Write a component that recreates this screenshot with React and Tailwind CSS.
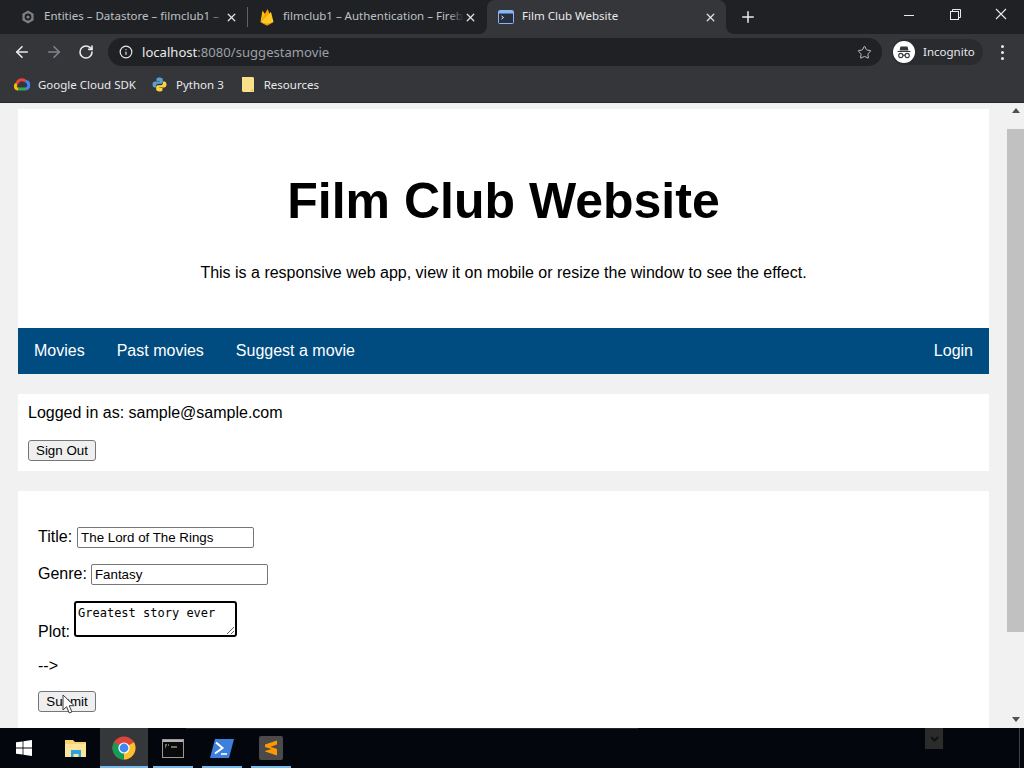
// App.jsx — Film Club "suggest a movie" page inside an incognito Chrome window on Windows.
import { ArrowLeft, ArrowRight, RotateCw, Info, Star, X, Plus } from "lucide-react";

const UI_FONT = "font-['Noto_Sans','Open_Sans',sans-serif]";
const PAGE_FONT = "font-['Liberation_Sans',Arial,sans-serif]";

function DatastoreIcon() {
  return (
    <svg width="16" height="16" viewBox="0 0 16 16" fill="none">
      <path d="M8 1.500 13.600 4.700v6.600L8 14.500 2.400 11.300V4.700z" fill="#7d8084" />
      <circle cx="8" cy="8" r="3.400" fill="#202124" />
      <circle cx="8" cy="8" r="1.600" fill="#7d8084" />
    </svg>
  );
}

function FirebaseIcon() {
  return (
    <svg width="16" height="18" viewBox="0 0 16 18">
      <path d="M1.500 14 3.500 2.500 7 7.500z" fill="#ffc107" />
      <path d="M1.500 14 8.500 1 11 6.500z" fill="#ffa000" />
      <path d="M1.500 14 12 4 14.500 14 8 17.500z" fill="#ffca28" />
      <path d="M1.500 14 8 17.500 14.500 14 8 15.800z" fill="#f59000" />
    </svg>
  );
}

function PageIcon() {
  return (
    <svg width="16" height="14" viewBox="0 0 16 14">
      <rect x="0.500" y="0.500" width="15" height="13" rx="1" fill="#27303c" stroke="#8ab4f8" />
      <rect x="1" y="1" width="14" height="2.500" fill="#8ab4f8" />
      <path d="M3.500 6l2 1.500-2 1.500" fill="none" stroke="#e8eaed" />
    </svg>
  );
}

function Tab({ icon, title, active, className }) {
  return (
    <div className={`flex h-[34px] shrink-0 items-center ${className} ${active ? "text-[#e8eaed]" : "text-[#bdc1c6]"}`}>
      <span className="flex w-[16px] justify-center">{icon}</span>
      <span className="relative ml-[8px] flex-1 whitespace-nowrap pb-[2px] text-[11.5px]">
        {title}
        {!active && (
          <span className="absolute inset-y-0 right-0 w-4 bg-gradient-to-r from-transparent to-[#202124]" />
        )}
      </span>
      <X size={13} strokeWidth={2.400} className="shrink-0 text-[#e0e2e5]" />
    </div>
  );
}

function TabStrip() {
  return (
    <div className="flex h-[34px] items-center bg-[#202124] pl-[20px]">
      <Tab icon={<DatastoreIcon />} title="Entities – Datastore – filmclub1 –" className="w-[218px]" />
      <span className="ml-[9px] h-5 w-px bg-[#5f6368]" />
      <Tab icon={<FirebaseIcon />} title="filmclub1 – Authentication – Fireb" className="ml-[11px] w-[218px]" />
      <div className="relative ml-[10px] w-[239px] shrink-0 rounded-t-lg bg-[#35363a] pl-[11px] pr-[9px]">
        <span className="absolute bottom-0 left-[-8px] h-2 w-2 bg-[#35363a]">
          <span className="block h-2 w-2 rounded-br-lg bg-[#202124]" />
        </span>
        <span className="absolute bottom-0 right-[-8px] h-2 w-2 bg-[#35363a]">
          <span className="block h-2 w-2 rounded-bl-lg bg-[#202124]" />
        </span>
        <Tab icon={<PageIcon />} title="Film Club Website" active />
      </div>
      <Plus size={18} strokeWidth={2} className="ml-[13px] text-[#e8eaed]" />
      <div className="ml-auto flex h-[34px] items-center text-[#e8eaed]">
        <span className="flex w-[46px] justify-center pb-[3px]">
          <span className="h-px w-[10px] bg-[#e8eaed]" />
        </span>
        <span className="flex w-[46px] justify-center pb-[6px]">
          <svg width="11" height="11" viewBox="0 0 11 11" fill="none" stroke="#e8eaed">
            <rect x="0.500" y="2.500" width="8" height="8" fill="#202124" />
            <path d="M2.500 2.500v-2h8v8h-2" />
          </svg>
        </span>
        <span className="flex w-[46px] justify-center pb-[6px]">
          <svg width="12" height="12" viewBox="0 0 12 12" stroke="#e8eaed" strokeWidth="1.100">
            <path d="M1 1l10 10M11 1 1 11" />
          </svg>
        </span>
      </div>
    </div>
  );
}

function IncognitoIcon() {
  return (
    <svg width="22" height="22" viewBox="0 0 22 22">
      <circle cx="11" cy="11" r="11" fill="#fff" />
      <path d="M7.500 5.500h7l1 4h-9zM4.500 10h13v1h-13z" fill="#35363a" />
      <g fill="none" stroke="#35363a" strokeWidth="1.100">
        <circle cx="7.800" cy="14.500" r="2.100" />
        <circle cx="14.200" cy="14.500" r="2.100" />
        <path d="M9.900 14.300h2.200" />
      </g>
    </svg>
  );
}

function Toolbar() {
  return (
    <div className="flex h-[36px] items-center bg-[#35363a] pl-[13px]">
      <ArrowLeft size={18} strokeWidth={2.200} className="text-[#e8eaed]" />
      <ArrowRight size={18} strokeWidth={2.200} className="ml-[14px] text-[#80848a]" />
      <RotateCw size={16} strokeWidth={2.400} className="ml-[15px] text-[#e8eaed]" />
      <div className="ml-[14px] flex h-[28px] w-[774px] items-center rounded-full bg-[#202124] pl-[11px]">
        <Info size={14} strokeWidth={2} className="text-[#e8eaed]" />
        <span className="ml-[9px] pt-[1px] text-[13.1px] leading-none text-[#e8eaed]">
          localhost<span className="text-[#9aa0a6]">:8080/suggestamovie</span>
        </span>
        <Star size={15} strokeWidth={1.600} className="ml-auto mr-[10px] text-[#bdc1c6]" />
      </div>
      <div className="ml-[10px] flex h-[26px] w-[91px] items-center rounded-full bg-[#2a2b2e] pl-[1px]">
        <IncognitoIcon />
        <span className="ml-[8px] text-[11.5px] text-[#e8eaed]">Incognito</span>
      </div>
      <span className="ml-[18px] flex flex-col gap-[3px]">
        <span className="h-[3px] w-[3px] rounded-full bg-[#e8eaed]" />
        <span className="h-[3px] w-[3px] rounded-full bg-[#e8eaed]" />
        <span className="h-[3px] w-[3px] rounded-full bg-[#e8eaed]" />
      </span>
    </div>
  );
}

function CloudIcon() {
  return (
    <svg width="16" height="13" viewBox="0 0 16 13" fill="none" strokeWidth="3">
      <path d="M4.500 11H4a2.700 2.700 0 0 1-1-5.200" stroke="#fbbc05" />
      <path d="M3 5.800A5 5 0 0 1 11.500 3.200" stroke="#ea4335" />
      <path d="M11.500 3.200A4 4 0 0 1 12 11" stroke="#4285f4" />
      <path d="M4 11h8" stroke="#34a853" />
    </svg>
  );
}

function PythonIcon() {
  return (
    <svg width="15" height="15" viewBox="0 0 15 15">
      <path d="M7.500.5c-3 0-3 1.200-3 2.200V4h3.200v.6H2.800C1.400 4.600.5 5.700.5 7.500s.9 3 2.200 3H4V9c0-1.300 1-2.200 2.300-2.200h2.800c1 0 1.700-.8 1.700-1.800V2.700C10.800 1.400 9.700.5 7.500.5z" fill="#5a9fd4" />
      <path d="M7.500 14.500c3 0 3-1.200 3-2.200V11H7.300v-.6h4.900c1.400 0 2.300-1.100 2.300-2.900s-.9-3-2.200-3H11V6c0 1.300-1 2.200-2.300 2.200H5.900c-1 0-1.700.8-1.700 1.800v2.300c0 1.300 1.100 2.200 3.300 2.200z" fill="#ffd43b" />
    </svg>
  );
}

function BookmarkFolder() {
  return (
    <svg width="12" height="15" viewBox="0 0 12 15">
      <path d="M0 0h11l1 1v14H1l-1-1z" fill="#fbe08a" />
      <path d="M9.500 15 12 12.500H9.500z" fill="#d9b95c" />
    </svg>
  );
}

function BookmarksBar() {
  return (
    <div className="flex h-[33px] items-center border-b border-b-[#26272a] bg-[#35363a] pb-[3px] pl-[14px] text-[11.5px] text-[#e8eaed]">
      <CloudIcon />
      <span className="ml-[8px]">Google Cloud SDK</span>
      <span className="ml-[16px]"><PythonIcon /></span>
      <span className="ml-[9px]">Python 3</span>
      <span className="ml-[18px]"><BookmarkFolder /></span>
      <span className="ml-[10px]">Resources</span>
    </div>
  );
}

function Scrollbar() {
  return (
    <div className="relative flex w-[17px] shrink-0 flex-col items-center bg-[#f1f1f1] pt-[26px]">
      <span className="absolute top-[5px] h-0 w-0 border-x-[4px] border-b-[5px] border-x-transparent border-b-[#505050]" />
      <div className="h-[503px] w-full bg-[#c1c1c1]" />
      <span className="absolute bottom-[6px] h-0 w-0 border-x-[4px] border-t-[5px] border-x-transparent border-t-[#505050]" />
    </div>
  );
}

function PageButton({ className, children }) {
  return (
    <button
      type="button"
      className={`box-border h-[21px] rounded-[3px] border border-[#767676] bg-[#efefef] px-[7px] text-[13.33px] leading-none text-black ${className}`}
    >
      {children}
    </button>
  );
}

function TextField({ defaultValue }) {
  return (
    <input
      readOnly
      defaultValue={defaultValue}
      className="box-border h-[21px] w-[177px] rounded-[2px] border border-[#767676] bg-white px-[3px] text-[13.33px] text-black outline-none"
    />
  );
}

function Cursor() {
  return (
    <svg className="absolute left-[44px] top-[203px]" width="14" height="21" viewBox="0 0 14 21">
      <path d="M1 1v15l3.600-3.400 2.600 6.400 2.700-1.100-2.700-6.200h5z" fill="#fff" stroke="#3a3a3a" strokeWidth="1" />
    </svg>
  );
}

function Page() {
  return (
    <div className={`min-w-0 flex-1 overflow-hidden bg-[#f1f1f1] px-[18px] pt-[6px] text-black ${PAGE_FONT}`}>
      <header className="h-[219px] bg-white pt-[64px] text-center">
        <h1 className="text-[50px] font-bold leading-[57px]">Film Club Website</h1>
        <p className="mt-[34px] text-[16px] leading-[18px]">
          This is a responsive web app, view it on mobile or resize the window to see the effect.
        </p>
      </header>

      <nav className="flex h-[46px] items-center bg-[#004b7f] px-4 text-[16px] text-white">
        <a>Movies</a>
        <a className="ml-8">Past movies</a>
        <a className="ml-8">Suggest a movie</a>
        <a className="ml-auto">Login</a>
      </nav>

      <section className="mt-5 h-[77px] bg-white pl-[10px] pt-[10px]">
        <p className="text-[16px] leading-[18px]">Logged in as: sample@sample.com</p>
        <div className="mt-[18px] flex">
          <PageButton>Sign Out</PageButton>
        </div>
      </section>

      <section className="relative mt-5 h-[300px] bg-white pl-5 pt-[36px] text-[16px]">
        <div className="flex items-center leading-[18px]">
          <span className="mr-[5px] pb-[2px]">Title:</span>
          <TextField defaultValue="The Lord of The Rings" />
        </div>
        <div className="mt-[16px] flex items-center leading-[18px]">
          <span className="mr-[4px] pb-[2px]">Genre:</span>
          <TextField defaultValue="Fantasy" />
        </div>
        <div className="mt-[16px] flex items-end">
          <span className="mr-[4px] mb-[-4px] leading-[18px]">Plot:</span>
          <textarea
            readOnly
            defaultValue="Greatest story ever"
            className="box-border h-[36px] w-[163px] rounded-[3px] border-2 border-black bg-white px-[2px] py-[2px] font-['DejaVu_Sans_Mono',monospace] text-[12px] leading-[16px] text-black outline-none"
          />
        </div>
        <p className="mt-[20px] leading-[18px]">--&gt;</p>
        <div className="mt-[16px] flex">
          <PageButton className="w-[58px]">Submit</PageButton>
        </div>
        <Cursor />
      </section>
    </div>
  );
}

function WindowsLogo() {
  return (
    <svg width="16" height="16" viewBox="0 0 16 16" fill="#fff">
      <path d="M0 2.300 6.600 1.400v6.200H0zM7.400 1.300 16 0v7.600H7.400zM0 8.400h6.600v6.200L0 13.700zM7.400 8.400H16V16l-8.600-1.300z" />
    </svg>
  );
}

function FolderIcon() {
  return (
    <svg width="22" height="19" viewBox="0 0 22 19">
      <path d="M0 1h8l2 2h11v15H0z" fill="#f9d36b" />
      <path d="M0 5h21v13H0z" fill="#fde49a" />
      <path d="M6 11h10v7h-2.500v-3h-5v3H6z" fill="#2aa3e0" />
    </svg>
  );
}

function ChromeIcon() {
  return (
    <svg width="24" height="24" viewBox="0 0 24 24">
      <circle cx="12" cy="12" r="11.500" fill="#db4437" />
      <path d="M12 12 22 6.300A11.500 11.500 0 0 1 12 23.500z" fill="#fbc02d" />
      <path d="M12 12 12 23.500A11.500 11.500 0 0 1 2 6.300z" fill="#0f9d58" />
      <circle cx="12" cy="12" r="5.600" fill="#fff" />
      <circle cx="12" cy="12" r="4.400" fill="#4285f4" />
    </svg>
  );
}

function CmdIcon() {
  return (
    <svg width="22" height="19" viewBox="0 0 22 19">
      <rect x="0.500" y="0.500" width="21" height="18" fill="#0a0a0a" stroke="#9a9a9a" />
      <rect x="1" y="1" width="20" height="2" fill="#b5b5b5" />
      <path d="M3 6h2M6 6h1M3 8h1M9 8h6" stroke="#d0d0d0" strokeWidth="1" />
    </svg>
  );
}

function PowerShellIcon() {
  return (
    <svg width="24" height="19" viewBox="0 0 24 19">
      <path d="M5 0h19l-5 19H0z" fill="#3f7fdc" />
      <path d="M6 3.500 12.500 9 5 14.500" fill="none" stroke="#fff" strokeWidth="2" />
      <path d="M11 15h6" stroke="#fff" strokeWidth="1.600" />
    </svg>
  );
}

function SublimeIcon() {
  return (
    <svg width="24" height="24" viewBox="0 0 24 24">
      <rect width="24" height="24" rx="2" fill="#4a4a4a" />
      <path d="M6 8.500 18 4.500v4L11.500 10.700 18 13v6.500L6 15.500v-.5l6.500-2L6 11z" fill="#ff9800" />
    </svg>
  );
}

function TaskbarItem({ width, running, active, children }) {
  return (
    <div className={`relative flex h-10 shrink-0 items-center justify-center ${width} ${active ? "bg-[#35383b]" : ""}`}>
      {children}
      {running && <span className="absolute inset-x-0 bottom-0 h-[2px] bg-[#76b9ed]" />}
    </div>
  );
}

function Taskbar() {
  return (
    <div className="relative flex h-10 shrink-0 items-center overflow-hidden bg-[#03070d]">
      <TaskbarItem width="w-[48px]"><WindowsLogo /></TaskbarItem>
      <TaskbarItem width="w-[52px]"><span className="pl-[3px]"><FolderIcon /></span></TaskbarItem>
      <TaskbarItem width="w-[48px]" running active><ChromeIcon /></TaskbarItem>
      <div className="ml-[5px]"><TaskbarItem width="w-[40px]" running><CmdIcon /></TaskbarItem></div>
      <div className="ml-[9px]"><TaskbarItem width="w-[40px]" running><PowerShellIcon /></TaskbarItem></div>
      <div className="ml-[9px]"><TaskbarItem width="w-[40px]" running><SublimeIcon /></TaskbarItem></div>
      {/* faint leftover of the window behind the taskbar */}
      <span className="absolute left-[186px] top-0 h-[1px] w-[452px] bg-[#24272d]" />
      <span className="absolute left-[925px] top-0 flex h-[21px] w-[18px] items-center justify-center bg-[#2b2b2b]">
        <svg width="9" height="6" viewBox="0 0 9 6" fill="none" stroke="#111" strokeWidth="2">
          <path d="M1 1l3.500 3.500L8 1" />
        </svg>
      </span>
      <span className="absolute right-[4px] top-0 h-full w-px bg-[#3d4046]" />
    </div>
  );
}

export default function App() {
  return (
    <div className={`relative flex h-[768px] w-[1024px] flex-col overflow-hidden ${UI_FONT}`}>
      <TabStrip />
      <Toolbar />
      <BookmarksBar />
      <div className="flex min-h-0 flex-1">
        <Page />
        <Scrollbar />
      </div>
      <Taskbar />
    </div>
  );
}
